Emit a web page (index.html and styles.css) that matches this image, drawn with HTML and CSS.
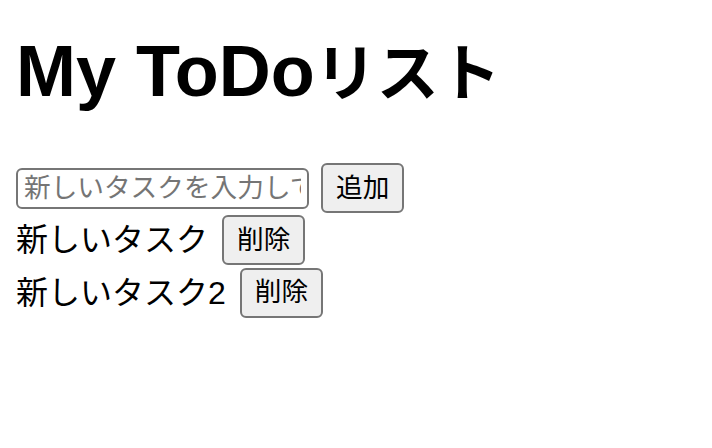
FILE: index.html
```html
<!DOCTYPE html>
<html lang="ja">
<head>
<meta charset="utf-8">
<title>My ToDoリスト</title>
<link rel="stylesheet" href="styles.css">
</head>
<body>
<div class="app">
  <h1 class="title">My ToDo<span class="title-kana">リスト</span></h1>
  <div class="add-row">
    <input class="task-input" type="text" placeholder="新しいタスクを入力してください">
    <button class="btn">追加</button>
  </div>
  <ul class="task-list">
    <li class="task"><span class="task-text">新しいタスク</span><button class="btn">削除</button></li>
    <li class="task"><span class="task-text">新しいタスク2</span><button class="btn">削除</button></li>
  </ul>
</div>
</body>
</html>
```
FILE: styles.css
```css
html, body {
  margin: 0;
  padding: 0;
  background: #ffffff;
}
body {
  font-family: "Liberation Sans", "Noto Sans CJK JP", sans-serif;
  color: #000000;
}
.app {
  padding: 0 16px;
}
.title {
  margin: 29px 0 0;
  font-size: 72px;
  line-height: 84px;
  font-weight: bold;
  height: 84px;
  white-space: nowrap;
}
.title-kana {
  font-size: 62px;
}
.add-row {
  margin-top: 49px;
  height: 52px;
  display: flex;
  align-items: center;
  gap: 12px;
}
.task-input {
  box-sizing: border-box;
  width: 293px;
  height: 41px;
  margin: 0;
  padding: 0 6px;
  border: 2px solid #767676;
  border-radius: 6px;
  font-family: inherit;
  font-size: 26.67px;
  color: #000000;
  background: #ffffff;
  outline: none;
}
.task-input::placeholder {
  color: #757575;
}
.btn {
  box-sizing: border-box;
  height: 50px;
  margin: 0;
  padding: 0 13px;
  border: 2px solid #767676;
  border-radius: 6px;
  background: #efefef;
  color: #000000;
  font-family: inherit;
  font-size: 26.67px;
  line-height: 1;
}
.task-list {
  list-style: none;
  margin: 0;
  padding: 0;
}
.task {
  height: 52.5px;
  display: flex;
  align-items: center;
}
.task-text {
  font-size: 32px;
  line-height: 40px;
  margin-right: 14px;
}
```
